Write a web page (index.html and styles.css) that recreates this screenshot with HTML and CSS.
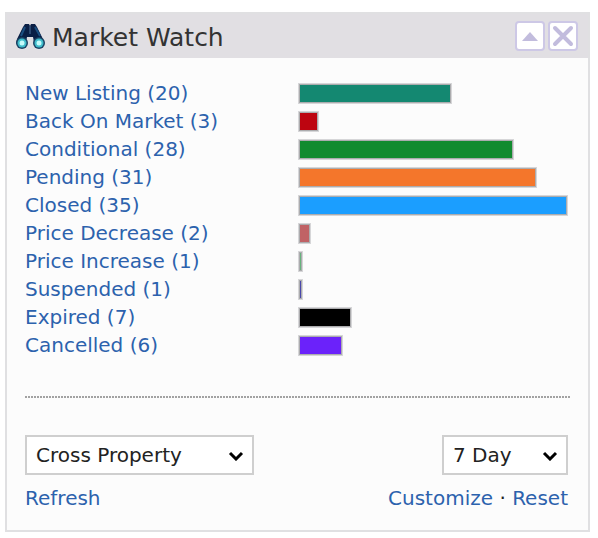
FILE: index.html
```html
<!DOCTYPE html>
<html lang="en">

<head>
    <meta charset="UTF-8">
    <meta name="viewport" content="width=device-width, initial-scale=1.0">
    <title>Market Watch</title>
    <link rel="stylesheet" href="styles.css">
</head>

<body>
    <section class="panel">
        <header class="panel-header">
            <svg class="panel-icon" viewBox="0 0 30 26" aria-hidden="true">
                <path d="M10 1h4l1 2 1-2h4l2 3 6 12 1 4-2 4h-6l-2-5-1-5h-6l-1 5-2 5H4l-3-4 1-4L8 4z" fill="#0a1f45" />
                <path d="M10 4L6 13M20 4l5 9" stroke="#1a4f80" stroke-width="2" />
                <path d="M15 3v8" stroke="#4a7099" stroke-width="1" />
                <circle cx="7" cy="20" r="6" fill="#1b4465" />
                <circle cx="24" cy="20" r="6" fill="#1b4465" />
                <circle cx="7" cy="20" r="4.5" fill="#3fbccb" />
                <circle cx="24" cy="20" r="4.5" fill="#3fbccb" />
                <circle cx="7" cy="20" r="2.5" fill="#c4fbfb" />
                <circle cx="24" cy="20" r="2.5" fill="#c4fbfb" />
            </svg>
            <h1 class="panel-title">Market Watch</h1>
            <button class="panel-button" type="button" aria-label="Collapse">
                <svg viewBox="0 0 26 26"><path d="M5 18l8-9 8 9z" fill="#c2bcdd" /></svg>
            </button>
            <button class="panel-button" type="button" aria-label="Close">
                <svg viewBox="0 0 26 26"><path d="M5 5l16 16M21 5L5 21" stroke="#c2bcdd" stroke-width="4" stroke-linecap="round" /></svg>
            </button>
        </header>
        <div class="panel-body">
            <ul class="status-list">
                <li class="status-row"><a href="#">New Listing (20)</a><span class="track"><span class="bar new" style="width: 57%"></span></span></li>
                <li class="status-row"><a href="#">Back On Market (3)</a><span class="track"><span class="bar back" style="width: 8%"></span></span></li>
                <li class="status-row"><a href="#">Conditional (28)</a><span class="track"><span class="bar conditional" style="width: 80%"></span></span></li>
                <li class="status-row"><a href="#">Pending (31)</a><span class="track"><span class="bar pending" style="width: 88.5%"></span></span></li>
                <li class="status-row"><a href="#">Closed (35)</a><span class="track"><span class="bar closed" style="width: 100%"></span></span></li>
                <li class="status-row"><a href="#">Price Decrease (2)</a><span class="track"><span class="bar decrease" style="width: 5%"></span></span></li>
                <li class="status-row"><a href="#">Price Increase (1)</a><span class="track"><span class="bar increase" style="width: 2%"></span></span></li>
                <li class="status-row"><a href="#">Suspended (1)</a><span class="track"><span class="bar suspended" style="width: 2%"></span></span></li>
                <li class="status-row"><a href="#">Expired (7)</a><span class="track"><span class="bar expired" style="width: 20%"></span></span></li>
                <li class="status-row"><a href="#">Cancelled (6)</a><span class="track"><span class="bar cancelled" style="width: 17%"></span></span></li>
            </ul>
            <hr class="divider">
            <div class="filters">
                <div class="select-box select-property">
                    <select aria-label="Property type">
                        <option>Cross Property</option>
                    </select>
                    <svg class="chevron" viewBox="0 0 16 10"><path d="M2 2l6 6 6-6" /></svg>
                </div>
                <div class="select-box select-period">
                    <select aria-label="Period">
                        <option>7 Day</option>
                    </select>
                    <svg class="chevron" viewBox="0 0 16 10"><path d="M2 2l6 6 6-6" /></svg>
                </div>
            </div>
            <div class="actions">
                <a href="#">Refresh</a>
                <span><a href="#">Customize</a> · <a href="#">Reset</a></span>
            </div>
        </div>
    </section>
</body>

</html>
```
FILE: styles.css
```css
* {
    box-sizing: border-box;
}

body {
    margin: 12px 8px 6px 5px;
    background: #fff;
    color: #222;
    font-family: Verdana, "DejaVu Sans", sans-serif;
    font-size: 20px;
    line-height: 28px;
}

a {
    color: #2c62ad;
    text-decoration: none;
}

.panel {
    border: 2px solid #e0e0e2;
    background: #fcfcfc;
}

.panel-header {
    display: flex;
    align-items: center;
    gap: 3px;
    height: 44px;
    padding: 0 10px 0 8px;
    background: #e1dfe3;
}

.panel-icon {
    width: 30px;
    height: 26px;
}

.panel-title {
    flex: 1;
    margin: 0 0 0 4px;
    padding-top: 3px;
    color: #333;
    font-size: 25px;
    font-weight: normal;
}

.panel-button {
    width: 30px;
    height: 30px;
    padding: 0;
    border: 2px solid #cdc8e6;
    border-radius: 4px;
    background: #fff;
}

.panel-button svg {
    display: block;
    width: 26px;
    height: 26px;
    fill: none;
}

.panel-body {
    padding: 21px 18px 18px;
}

.status-list {
    margin: 0;
    padding: 0;
    list-style: none;
}

.status-row {
    display: grid;
    grid-template-columns: 1fr 1fr;
    align-items: center;
    height: 28px;
}

.track {
    padding-right: 2px;
}

.bar {
    display: block;
    height: 21px;
    border: 1px solid #d6d6d8;
    box-shadow: inset 0 0 0 1px #acacae;
}

.new {
    background: #148871;
}

.back {
    background: #bd0510;
}

.conditional {
    background: #128b2f;
}

.pending {
    background: #f4762b;
}

.closed {
    background: #1b9eff;
}

.decrease {
    background: #c06265;
}

.increase {
    background: #66b37c;
}

.suspended {
    background: #4a48ab;
}

.expired {
    background: #000;
}

.cancelled {
    background: #6b22fa;
}

.divider {
    height: 2px;
    margin: 37px 0;
    border: 0;
    background: repeating-linear-gradient(90deg, #a2a2a2 0 2px, transparent 2px 3px);
}

.filters,
.actions {
    display: flex;
    justify-content: space-between;
    padding-right: 2px;
}

.actions {
    margin-top: 9px;
}

.select-box {
    position: relative;
}

.select-property {
    width: 229px;
}

.select-period {
    width: 126px;
}

select {
    appearance: none;
    width: 100%;
    height: 40px;
    padding: 0 9px;
    border: 2px solid #cfcfcf;
    border-radius: 0;
    background: #fff;
    color: #222;
    font: inherit;
}

.chevron {
    position: absolute;
    top: 16px;
    right: 10px;
    width: 16px;
    height: 10px;
    fill: none;
    stroke: #000;
    stroke-width: 3;
    pointer-events: none;
}
```
